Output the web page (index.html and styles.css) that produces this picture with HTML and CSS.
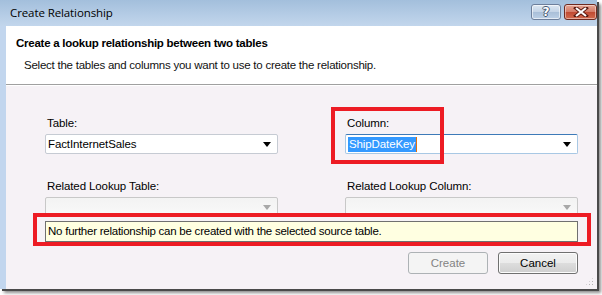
FILE: index.html
```html
<!DOCTYPE html>
<html>
<head>
<meta charset="utf-8">
<link rel="stylesheet" href="styles.css">
</head>
<body>
<div class="window">
  <div class="titlebar">
    <span class="title">Create Relationship</span>
    <div class="tbuttons">
      <div class="tbtn help"><span>?</span></div>
      <div class="tbtn close">
        <svg width="16" height="10" viewBox="0 0 16 10"><path d="M3 1 L13 9 M13 1 L3 9" stroke="#5a1a10" stroke-width="4" stroke-linecap="square"/><path d="M3 1 L13 9 M13 1 L3 9" stroke="#fff" stroke-width="2.2"/></svg>
      </div>
    </div>
  </div>
  <div class="frame">
    <div class="edge"></div>
    <div class="client">
      <div class="header">
        <div class="heading">Create a lookup relationship between two tables</div>
        <div class="sub">Select the tables and columns you want to use to create the relationship.</div>
      </div>
      <div class="content">
        <div class="grid">
          <div class="field">
            <div class="label">Table:</div>
            <div class="combo"><span class="val">FactInternetSales</span><span class="arrow"></span></div>
          </div>
          <div class="field">
            <div class="label">Column:</div>
            <div class="combo focus"><span class="val"><span class="sel">ShipDateKey</span><span class="caret"></span></span><span class="arrow"></span></div>
          </div>
          <div class="field">
            <div class="label">Related Lookup Table:</div>
            <div class="combo disabled"><span class="val"></span><span class="arrow"></span></div>
          </div>
          <div class="field">
            <div class="label">Related Lookup Column:</div>
            <div class="combo disabled"><span class="val"></span><span class="arrow"></span></div>
          </div>
        </div>
        <div class="message">No further relationship can be created with the selected source table.</div>
        <div class="buttons">
          <div class="btn dis">Create</div>
          <div class="btn">Cancel</div>
        </div>
        <div class="grip"></div>
        <div class="mark mark1"></div>
        <div class="mark mark2"></div>
      </div>
    </div>
  </div>
</div>
</body>
</html>
```
FILE: styles.css
```css
html, body { margin: 0; padding: 0; }
body {
  width: 602px; height: 295px; overflow: hidden;
  background: #ffffff;
  font-family: "Liberation Sans", Arial, sans-serif;
  font-size: 12px; color: #000;
}
.window {
  width: 597px; height: 289px;
  display: flex; flex-direction: column;
  box-shadow: 2px 2px 0 #4a4a4a, 4px 4px 3px rgba(0,0,0,0.45);
  position: relative;
}
.titlebar {
  height: 26px; flex: none;
  background: linear-gradient(#a3bfdc, #b6cde6 60%, #c2d6ec);
  display: flex; align-items: flex-start; justify-content: space-between;
}
.title {
  font-family: "Open Sans", sans-serif; font-size: 11.5px; color: #000;
  margin: 5px 0 0 10px; letter-spacing: -0.1px;
}
.tbuttons { display: flex; gap: 3px; margin-top: 4px; }
.tbtn {
  height: 16px; border-radius: 3px; display: flex; align-items: center; justify-content: center;
  box-sizing: border-box;
}
.help {
  width: 30px; border: 1px solid #6d7f9b;
  background: linear-gradient(#dde8f3, #c3d3e6 50%, #a9bfd8 51%, #bcd0e6);
  box-shadow: inset 0 0 0 1px rgba(255,255,255,0.6);
}
.help span {
  font-family: "DejaVu Sans", sans-serif; font-weight: bold; font-size: 12px; color: #fff;
  text-shadow: 1px 0 #45566f, -1px 0 #45566f, 0 1px #45566f, 0 -1px #45566f;
  line-height: 12px;
}
.close {
  width: 33px; border: 1px solid #6e2a20;
  background: linear-gradient(#e6a593, #d47a66 50%, #c04a32 51%, #d26a4e);
  box-shadow: inset 0 0 0 1px rgba(255,255,255,0.45);
}
.frame { flex: 1; display: flex; }
.edge { width: 6px; background: #c2d6ee; flex: none; }
.client { flex: 1; display: flex; flex-direction: column; }
.header {
  height: 59px; background: #fff; border-bottom: 1px solid #a0a0a0;
  box-sizing: border-box; padding: 11px 0 0 10px;
}
.heading { font-weight: bold; font-size: 11.5px; letter-spacing: -0.25px; }
.sub { margin: 10px 0 0 8px; font-size: 11.5px; letter-spacing: -0.24px; color: #111; }
.content {
  flex: 1; background: #f6f2f6; position: relative;
  border-top: 1px solid #fff;
  padding: 30px 19px 0 39px;
}
.grid {
  display: grid; grid-template-columns: 233px 233px; column-gap: 67px; row-gap: 25px;
}
.label { font-size: 11.5px; margin: 0 0 4px 2px; line-height: 14px; letter-spacing: -0.1px; }
.combo {
  height: 20px; box-sizing: border-box; background: #fff;
  border: 1px solid #c6cbd3; border-radius: 2px;
  display: flex; align-items: center; justify-content: space-between;
}
.combo .val { margin-left: 2px; font-size: 11.5px; display: flex; align-items: center; letter-spacing: -0.1px; }
.arrow {
  width: 0; height: 0; margin-right: 6px;
  border-left: 4px solid transparent; border-right: 4px solid transparent; border-top: 5px solid #000;
}
.focus { border-color: #a8c8e4; border-top-color: #3d7ab8; }
.sel { background: #3399ff; color: #fff; padding: 0 1px; line-height: 15px; }
.caret { width: 1px; height: 15px; background: #e07010; }
.disabled { border-color: #c8c8c8; background: linear-gradient(#f3f3f3, #f9f9f9); }
.disabled .arrow { border-top-color: #a8a8a8; }
.message {
  margin-top: 4px; width: 533px; height: 21px; box-sizing: border-box;
  background: #ffffe1; border: 1px solid #707070;
  font-size: 11.5px; padding: 3px 0 0 2px; letter-spacing: -0.24px;
}
.buttons { display: flex; justify-content: flex-end; gap: 10px; width: 533px; margin-top: 10px; }
.btn {
  width: 80px; height: 22px; box-sizing: border-box; border-radius: 3px;
  border: 1px solid #707070; font-size: 11.5px;
  display: flex; align-items: center; justify-content: center;
  background: linear-gradient(#f2f2f2, #ebebeb 50%, #dddddd 51%, #cfcfcf);
  box-shadow: inset 0 0 0 1px #fcfcfc;
}
.btn.dis { border-color: #adb2b5; background: #f4f4f4; color: #838383; box-shadow: none; }
.grip {
  position: absolute; right: 3px; bottom: 3px; width: 9px; height: 9px;
  background-image: radial-gradient(#b5b5b5 40%, transparent 45%);
  background-size: 3px 3px;
  clip-path: polygon(100% 0, 100% 100%, 0 100%);
}
.mark { position: absolute; border: 4px solid #ed1c24; box-sizing: border-box; }
.mark1 { left: 325px; top: 21px; width: 113px; height: 57px; }
.mark2 { left: 27px; top: 127px; width: 558px; height: 33px; }
```
